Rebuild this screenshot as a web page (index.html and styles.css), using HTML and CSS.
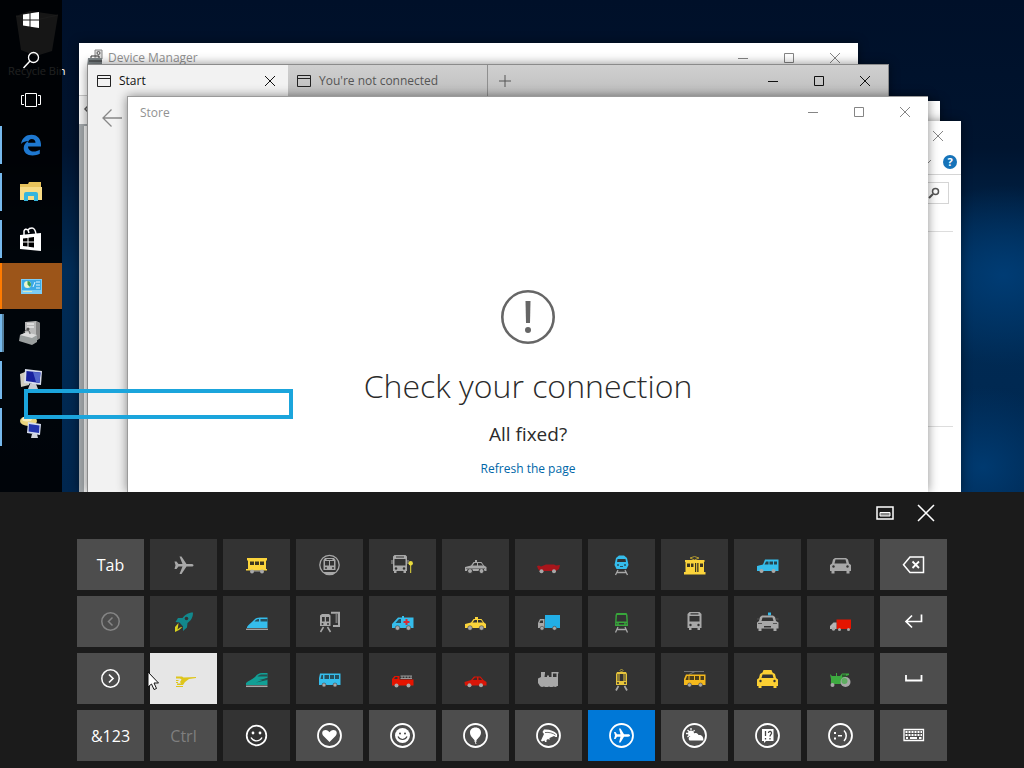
FILE: index.html
```html
<!DOCTYPE html>
<html lang="en">
    <head>
        <title>Desktop</title>
        <meta charset="UTF-8">
        <link rel="stylesheet" href="styles.css">
    </head>
    <body>
        <div class="desktop">
            <div class="recycle">
                <svg width="42" height="46" viewBox="0 0 42 46"><path d="M0 6 L14 1 L42 5 L36 41 L20 46 L5 40Z" fill="#b5b5b5"/><path d="M0 6L20 10L42 5" stroke="#ddd" fill="none"/></svg>
                <span>Recycle Bin</span>
            </div>

            <!-- system window -->
            <div class="window w-back"></div>
            <div class="window w-system">
                <div class="titlebar inactive">
                    <div class="caption">
                        <button aria-label="Close"><svg width="12" height="12" viewBox="0 0 12 12"><path d="M1 1L11 11M11 1L1 11"/></svg></button>
                    </div>
                </div>
                <div class="ribbon">
                    <svg width="9" height="6" viewBox="0 0 9 6"><path d="M0 1L4 5L8 1" fill="none" stroke="#888"/></svg>
                    <button class="help" aria-label="Help">?</button>
                </div>
                <div class="address">
                    <button class="find" aria-label="Search"><svg width="12" height="12" viewBox="0 0 12 12"><circle cx="7.500" cy="4.500" r="3" fill="none" stroke="#555" stroke-width="1.500"/><path d="M5 7L1 11" stroke="#555" stroke-width="2"/></svg></button>
                </div>
                <div class="panel"></div>
            </div>

            <!-- device manager -->
            <div class="window w-device">
                <div class="titlebar inactive">
                    <svg class="app-icon" width="16" height="18" viewBox="0 0 16 18"><path d="M8 1h7v9H8z" fill="#ddd" stroke="#888"/><circle cx="11.500" cy="4" r="1.500" fill="none" stroke="#555"/><path d="M1 9h14v9H0z" fill="#7d8588"/><path d="M2 12h13M4 9V7h8v2" stroke="#333" fill="none"/></svg>
                    <span class="name">Device Manager</span>
                    <div class="caption">
                        <button aria-label="Minimize"><svg width="12" height="12" viewBox="0 0 12 12"><path d="M1 6.500H11"/></svg></button>
                        <button aria-label="Maximize"><svg width="12" height="12" viewBox="0 0 12 12"><path d="M1.500 1.500H10.500V10.500H1.500Z"/></svg></button>
                        <button aria-label="Close"><svg width="12" height="12" viewBox="0 0 12 12"><path d="M1 1L11 11M11 1L1 11"/></svg></button>
                    </div>
                </div>
                <div class="menu"></div>
                <div class="tools"><svg width="8" height="10" viewBox="0 0 8 10"><path d="M6 1L2 5L6 9" fill="none" stroke="#555" stroke-width="1.500"/></svg></div>
                <div class="tree"></div>
            </div>

            <!-- browser -->
            <div class="window w-edge">
                <div class="tabs">
                    <div class="tab on">
                        <svg width="14" height="12" viewBox="0 0 14 12"><path d="M.5.5H13.500V11.500H.5ZM.5 3.500H13.500" fill="none" stroke="#222"/></svg>
                        <span>Start</span>
                        <button aria-label="Close tab"><svg width="12" height="12" viewBox="0 0 12 12"><path d="M1 1L11 11M11 1L1 11"/></svg></button>
                    </div>
                    <div class="tab">
                        <svg width="14" height="12" viewBox="0 0 14 12"><path d="M.5.5H13.500V11.500H.5ZM.5 3.500H13.500" fill="none" stroke="#222"/></svg>
                        <span>You're not connected</span>
                    </div>
                    <button class="new" aria-label="New tab"><svg width="12" height="12" viewBox="0 0 12 12"><path d="M6 0V12M0 6H12" stroke="#555"/></svg></button>
                    <div class="caption">
                        <button aria-label="Minimize"><svg width="12" height="12" viewBox="0 0 12 12"><path d="M1 6.500H11"/></svg></button>
                        <button aria-label="Maximize"><svg width="12" height="12" viewBox="0 0 12 12"><path d="M1.500 1.500H10.500V10.500H1.500Z"/></svg></button>
                        <button aria-label="Close"><svg width="12" height="12" viewBox="0 0 12 12"><path d="M1 1L11 11M11 1L1 11"/></svg></button>
                    </div>
                </div>
                <div class="nav">
                    <button aria-label="Back"><svg width="20" height="18" viewBox="0 0 20 18"><path d="M20 9H1M9.500 .5L1 9L9.500 17.500" fill="none" stroke="#888" stroke-width="1.300"/></svg></button>
                </div>
            </div>

            <!-- store -->
            <div class="window w-store">
                <div class="titlebar inactive">
                    <span class="name">Store</span>
                    <div class="caption">
                        <button aria-label="Minimize"><svg width="12" height="12" viewBox="0 0 12 12"><path d="M1 6.500H11"/></svg></button>
                        <button aria-label="Maximize"><svg width="12" height="12" viewBox="0 0 12 12"><path d="M1.500 1.500H10.500V10.500H1.500Z"/></svg></button>
                        <button aria-label="Close"><svg width="12" height="12" viewBox="0 0 12 12"><path d="M1 1L11 11M11 1L1 11"/></svg></button>
                    </div>
                </div>
                <div class="message">
                    <svg width="54" height="54" viewBox="0 0 54 54"><circle cx="27" cy="27" r="25.700" fill="none" stroke="#666" stroke-width="2.600"/><path d="M24.500 11H29.500L29 33H25Z" fill="#666"/><circle cx="27" cy="40" r="3" fill="#666"/></svg>
                    <h1>Check your connection</h1>
                    <p>All fixed?</p>
                    <a href="#">Refresh the page</a>
                </div>
            </div>

            <div class="taskbar">
                <button class="sys" aria-label="Start"><svg width="18" height="18" viewBox="0 0 18 18"><path d="M1 3.500L7.500 2.500V8.500H1ZM8.500 2.300L17 1V8.500H8.500ZM1 9.500H7.500V15.500L1 14.500ZM8.500 9.500H17V17L8.500 15.700Z" fill="#fff"/></svg></button>
                <button class="sys" aria-label="Search"><svg width="18" height="18" viewBox="0 0 18 18"><circle cx="11.500" cy="6.500" r="5" fill="none" stroke="#fff" stroke-width="1.300"/><path d="M8 10L1.500 17" stroke="#fff" stroke-width="1.500"/></svg></button>
                <button class="sys" aria-label="Task View"><svg width="20" height="16" viewBox="0 0 20 16"><path d="M4.500 1.500H15.500V14.500H4.500ZM3 3.500H.500V12.500H3M17 3.500H19.500V12.500H17" fill="none" stroke="#fff"/></svg></button>
                <button class="app" aria-label="Microsoft Edge"><svg width="22" height="22" viewBox="0 0 22 22"><path d="M1 10C2 4 6 .7 11.500 .7C18 .7 21.500 5.500 21 12.500H8C8.300 16 10.500 17.500 13.500 17.500C16 17.500 18 16.700 19.800 15.700V19.800C17.500 21 15.300 21.500 12.500 21.500C7 21.500 3.500 18.500 3.700 14C3.800 11 5.500 8.500 8.500 7C5.500 7 3 7.800 1 10ZM8 8.800H15.500C15.500 6.500 14 5 11.800 5C9.800 5 8.300 6.500 8 8.800Z" fill="#1e78d0"/></svg></button>
                <button class="app" aria-label="File Explorer"><svg width="22" height="20" viewBox="0 0 22 20"><path d="M0 2H8L9 0H21V18H0Z" fill="#e8c35c"/><path d="M0 5H22V18H0Z" fill="#f8dc86"/><path d="M4 19V12Q4 10 6 10H16Q18 10 18 12V19H14V14H8V19Z" fill="#35b5dd"/></svg></button>
                <button class="app" aria-label="Store"><svg width="22" height="25" viewBox="0 0 22 25"><path d="M4 8V4Q5 1 8 3L9 6M8 3Q9 1 12 1Q15 1 16 7" fill="none" stroke="#fff" stroke-width="1.500"/><path d="M0 8L21 6V24L0 22Z" fill="#fff"/><path d="M3 11.500L7.500 11V14.500H3ZM8.500 10.800L14 10V14.500H8.500ZM3 15.500H7.500V19.500L3 19ZM8.500 15.500H14V20.500L8.500 19.700Z" fill="#000"/></svg></button>
                <button class="app active" aria-label="Control Panel"><svg width="21" height="15" viewBox="0 0 21 15"><path d="M0 0H21V15H0Z" fill="#7dcdf5"/><path d="M1 1H20V11H1Z" fill="#3baae6"/><circle cx="6.500" cy="5.500" r="3.500" fill="#e9f4cf"/><path d="M6.500 5.500V2A3.500 3.500 0 0 1 9 8Z" fill="#3c9d4c"/><path d="M12 8L14 3M15 3H19M15 6H19M15 9H19" stroke="#dff6ff" stroke-width="1"/><path d="M2 12.500H11" stroke="#d7e8c0"/></svg></button>
                <button class="app many" aria-label="Device Manager"><svg width="22" height="24" viewBox="0 0 22 24"><path d="M6 1L17 0L21 2V17L17 20L6 18Z" fill="#b9b9b9"/><path d="M17 0L21 2V17L17 20Z" fill="#858585"/><path d="M8 3H15M8 6H15" stroke="#fff"/><circle cx="9" cy="8" r="1.500" fill="#555"/><path d="M1 14L8 11L18 14V21L13 24L0 20Z" fill="#9a9f9f"/><path d="M1 14L8 11L18 14L13 17Z" fill="#dcdcdc"/><path d="M5 12C5 8 11 8 11 13" stroke="#555" fill="none"/></svg></button>
                <button class="app" aria-label="System"><svg width="24" height="22" viewBox="0 0 24 22"><path d="M1 5L6 3L10 5V16L2 18Z" fill="#cfcbbf"/><path d="M6 0L23 2L22 16L5 14Z" fill="#d6dceb"/><path d="M7.500 2L21.500 3.500L20.500 14L7 12Z" fill="#18219e"/><path d="M14 3L21.500 3.500L20.500 14L17 13Z" fill="#5367cb"/><path d="M11 15H17L19 20H9Z" fill="#c7cbd2"/></svg></button>
                <button class="app" aria-label="Remote Desktop"><svg width="22" height="24" viewBox="0 0 22 24"><ellipse cx="8.500" cy="6" rx="8.500" ry="5" fill="#ead57e"/><ellipse cx="7" cy="4" rx="5" ry="2.500" fill="#f8edbd"/><path d="M8 7L21 9L20 20L7 18Z" fill="#d4dced"/><path d="M9 9L19.500 10.500L19 18L8.500 16.500Z" fill="#2335ad"/><path d="M12 19H17L18 23H11Z" fill="#d0d4da"/></svg></button>
            </div>
            <div class="highlight"></div>
        </div>

        <div class="keyboard">
            <div class="top">
                <button aria-label="Dock keyboard"><svg width="18" height="14" viewBox="0 0 18 14"><path d="M1 1H17V13H1Z" fill="none" stroke="#fff" stroke-width="1.500"/><path d="M4 6.500H14V10H4Z" fill="#888" stroke="#fff"/></svg></button>
                <button aria-label="Close keyboard"><svg width="18" height="18" viewBox="0 0 18 18"><path d="M1 1L17 17M17 1L1 17" stroke="#fff" stroke-width="1.500"/></svg></button>
            </div>
            <div class="keys">
                <!-- row 1 -->
                <button class="fn">Tab</button>
                <button aria-label="Airplane"><svg viewBox="0 0 25 25"><path d="M3.500 9.500H5.500L7.500 12H11.500L8.500 4.500H10.500L15.500 12H20C22 12 22.500 12.700 22.500 13.300S22 14.600 20 14.600H15.500L10.500 22H8.500L11.500 14.600H7.500L5.500 17H3.500L4.500 13.300Z" fill="#a8a8a8"/></svg></button>
                <button aria-label="Railway car"><svg viewBox="0 0 25 25"><path d="M3 6H23V8.500H22V17H23V18.500H2V17H4V8.500H3Z" fill="#fbd43b"/><path d="M6 9.500H10V13H6ZM11 9.500H15V13H11ZM16 9.500H20V13H16Z" fill="#3b3520"/><circle cx="8" cy="19.500" r="2" fill="#a8a8a8"/><circle cx="18" cy="19.500" r="2" fill="#a8a8a8"/><path d="M8 19H18" stroke="#a8a8a8"/></svg></button>
                <button aria-label="Metro"><svg viewBox="0 0 25 25"><circle cx="12.500" cy="13" r="9.700" fill="none" stroke="#a8a8a8" stroke-width="1.300"/><path d="M8 6H17L18.500 8V18H6.500V8Z" fill="#a8a8a8"/><path d="M8 9H12V13.500H8ZM13 9H17V13.500H13Z" fill="#333"/><path d="M9.500 7.500H15.500" stroke="#333"/><circle cx="9" cy="16" r="1" fill="#333"/><circle cx="16" cy="16" r="1" fill="#333"/><path d="M6 20H19L16 22.500H9Z" fill="#a8a8a8"/></svg></button>
                <button aria-label="Bus stop"><svg viewBox="0 0 25 25"><path d="M4.500 3H15.500L17 4.500V19H16V21H13.500V19H6.500V21H4V19H3V4.500Z" fill="#a8a8a8"/><path d="M4.500 7H15.500V13.500H4.500ZM6 4.500H14V5.500H6Z" fill="#333"/><circle cx="6" cy="16.500" r="1.200" fill="#333"/><circle cx="14" cy="16.500" r="1.200" fill="#333"/><path d="M2 8V12M18 8V12" stroke="#a8a8a8"/><circle cx="20.700" cy="11.300" r="2.200" fill="#eadc3d"/><path d="M20.700 12V21" stroke="#eadc3d"/></svg></button>
                <button aria-label="Police car"><svg viewBox="0 0 25 25"><path d="M2 15L8 13.500L10.500 10H12V8H14V10H18.500L21 13.500L23.500 15V19H2Z" fill="#a8a8a8"/><path d="M9.500 13.500L11.500 11H14V13.500ZM15 11H18L20 13.500H15Z" fill="#333"/><circle cx="7" cy="19" r="2.500" fill="#a8a8a8" stroke="#333"/><circle cx="18.500" cy="19" r="2.500" fill="#a8a8a8" stroke="#333"/><path d="M3 16.500H22" stroke="#777"/></svg></button>
                <button aria-label="Race car"><svg viewBox="0 0 25 25"><path d="M1 14L3 13.500L5 14.500L10 12.500H18L20 13.500L24 13L23 17L20 19H4L2 17Z" fill="#a8151b"/><circle cx="5.500" cy="19.300" r="2" fill="#a8a8a8"/><circle cx="18" cy="19.300" r="2" fill="#a8a8a8"/></svg></button>
                <button aria-label="Train"><svg viewBox="0 0 25 25"><path d="M10 3.500H15L18 6L19.500 13L17.500 17H7.500L5.500 13L7 6Z" fill="#35bdec"/><path d="M8.500 7H16.500L17 10H8Z" fill="#333"/><circle cx="9" cy="13" r="1" fill="#26505e"/><circle cx="16" cy="13" r="1" fill="#26505e"/><path d="M11 14.500H14" stroke="#26505e"/><path d="M9 18L6.500 23M16 18L18.500 23M8 20.500H17" stroke="#a8a8a8" stroke-width="1.300"/></svg></button>
                <button aria-label="Tram car"><svg viewBox="0 0 25 25"><path d="M12.500 8L8 6L12.500 4.500L17 6Z" fill="none" stroke="#b49a30"/><path d="M3 8H22.500V10H22V20H23.500V22.500H2V20H3.500V10H3Z" fill="#fbd43b"/><path d="M5 11.500H8V15H5ZM9 11.500H11.500V15H9ZM13 11H16.500V20H13ZM18 11.500H21V15H18Z" fill="#3b3520"/><path d="M14.700 11V20" stroke="#fbd43b"/></svg></button>
                <button aria-label="Van"><svg viewBox="0 0 25 25"><path d="M2 14L8 12.500L10 7.500H23.500V19H2Z" fill="#35bdec"/><path d="M9.500 12.500L11 9.500H13.500V12.500ZM14.500 9.500H18V12.500H14.500ZM19 9.500H22V12.500H19Z" fill="#26424c"/><circle cx="6.500" cy="19" r="2" fill="#a8a8a8"/><circle cx="18.500" cy="19" r="2" fill="#a8a8a8"/></svg></button>
                <button aria-label="Oncoming car"><svg viewBox="0 0 25 25"><path d="M7 6H18L20 7.500L21 11.500L23 13V19H21.500V21.500H18.500V19H6.500V21.500H3.500V19H2V13L4 11.500L5 7.500Z" fill="#a8a8a8"/><path d="M7.500 7.500H17.500L18.500 11.500H6.500Z" fill="#333"/><circle cx="5.500" cy="14.500" r="1.200" fill="#333"/><circle cx="19.500" cy="14.500" r="1.200" fill="#333"/></svg></button>
                <button class="fn" aria-label="Backspace"><svg viewBox="0 0 25 25"><path d="M9 5H22.500V20.500H9L2.500 12.700Z" fill="none" stroke="#fff" stroke-width="1.500"/><path d="M11.500 9.500L18 16M18 9.500L11.500 16" stroke="#fff" stroke-width="1.800"/></svg></button>

                <!-- row 2 -->
                <button class="fn off" aria-label="Previous"><svg viewBox="0 0 25 25"><circle cx="12.500" cy="12.500" r="8.700" fill="none" stroke="#858585" stroke-width="1.500"/><path d="M14.500 8.500L10.500 12.500L14.500 16.500" fill="none" stroke="#858585" stroke-width="1.500"/></svg></button>
                <button aria-label="Rocket"><svg viewBox="0 0 25 25"><path d="M22 3.500C17 3.500 13.500 6 11.500 9H7L4.500 13L8.500 13.500L12 17.500V22L16 18.500L16.500 14C20 11.500 22 8.500 22 3.500Z" fill="#12888c"/><circle cx="15.500" cy="9.500" r="1.800" fill="#333"/><path d="M7.500 14L4 18V23L8 21L11.500 18L9 18.500L6.500 20.500L7 18Z" fill="#d9d21d"/></svg></button>
                <button aria-label="High-speed train"><svg viewBox="0 0 25 25"><path d="M3 18C4 16 7 14 9 12C11 9.500 13 8.500 16 8.500H23.500V19H3Z" fill="#35bdec"/><path d="M10.500 12.500C12 10.500 13.500 10 15 10V12.500ZM16.500 10H23.500V12.500H16.500Z" fill="#26505e"/><path d="M2 20.300H24" stroke="#a8a8a8" stroke-width="1.300"/></svg></button>
                <button aria-label="Station"><svg viewBox="0 0 25 25"><path d="M5 5H12L13.500 6.500V17H3V6.500Z" fill="#a8a8a8"/><path d="M5 8H7.700V12.500H5ZM9 8H12V12.500H9Z" fill="#333"/><circle cx="5.500" cy="15" r="1" fill="#333"/><circle cx="11" cy="15" r="1" fill="#333"/><path d="M6.500 18L3.500 23M10.500 18L13.500 23" stroke="#a8a8a8" stroke-width="1.500"/><path d="M14 3.800H22V17H16" fill="none" stroke="#a8a8a8" stroke-width="2"/><path d="M19.500 5V14" stroke="#777" stroke-width="2"/></svg></button>
                <button aria-label="Ambulance"><svg viewBox="0 0 25 25"><path d="M2 15L8 8.500H12V7H14V8.500H23.500V19H2Z" fill="#35bdec"/><path d="M5.500 14L9 10H11V14Z" fill="#26505e"/><path d="M16.500 10V16M13.500 13H19.500" stroke="#d92b32" stroke-width="2"/><circle cx="7.500" cy="19" r="2.300" fill="#a8a8a8" stroke="#333" stroke-width=".5"/><circle cx="18.500" cy="19" r="2.300" fill="#a8a8a8" stroke="#333" stroke-width=".5"/></svg></button>
                <button aria-label="Taxi"><svg viewBox="0 0 25 25"><path d="M2 15L8 13.500L10.500 10H12V8H15V10H18.500L21 13.500L23 15V19H2Z" fill="#fbd43b"/><path d="M9.500 13.500L11.500 11H14V13.500ZM15 11H18L20 13.500H15Z" fill="#333"/><circle cx="7" cy="19" r="2.300" fill="#a8a8a8" stroke="#333" stroke-width=".5"/><circle cx="18.500" cy="19" r="2.300" fill="#a8a8a8" stroke="#333" stroke-width=".5"/></svg></button>
                <button aria-label="Delivery truck"><svg viewBox="0 0 25 25"><path d="M9 6H24V19H9Z" fill="#22aee6"/><path d="M4 10H8.500V19H2V14Z" fill="#a8a8a8"/><path d="M4.500 11.500H7V14H3.500Z" fill="#333"/><circle cx="6" cy="19.300" r="2" fill="#a8a8a8" stroke="#333" stroke-width=".5"/><circle cx="18.500" cy="19.300" r="2" fill="#a8a8a8" stroke="#333" stroke-width=".5"/></svg></button>
                <button aria-label="Light rail"><svg viewBox="0 0 25 25"><path d="M7.500 4H17.500L18.500 6L19 17H6L6.500 6Z" fill="#38a63b"/><path d="M8 6H17L17.500 12.500H7.500ZM7.500 14H17.500V15.500H7.500Z" fill="#333"/><circle cx="9" cy="15" r="1" fill="#38a63b"/><circle cx="16" cy="15" r="1" fill="#38a63b"/><path d="M9 18L6.500 23.500M16 18L18.500 23.500M8 20.500H17" stroke="#a8a8a8" stroke-width="1.300"/></svg></button>
                <button aria-label="Oncoming bus"><svg viewBox="0 0 25 25"><path d="M7.500 3H17.500L19.500 5V19H18V21H15.500V19H9.500V21H7V19H5.500V5Z" fill="#a8a8a8"/><path d="M7.500 7H17.500V12.500H7.500ZM8.500 4.300H16.500V5.500H8.500Z" fill="#333"/><circle cx="8.500" cy="16" r="1.200" fill="#333"/><circle cx="16.500" cy="16" r="1.200" fill="#333"/></svg></button>
                <button aria-label="Oncoming police car"><svg viewBox="0 0 25 25"><path d="M13 3.500H16V6.500H13Z" fill="#35bdec"/><path d="M7 6.500H18L20 8L21 12L23.500 13.500V19.500H21.500V22H18.500V19.500H6.500V22H3.500V19.500H2V13.500L4 12L5 8Z" fill="#a8a8a8"/><path d="M7.500 8.500H17.500L18.500 12H6.500ZM9 17H16V18.500H9Z" fill="#333"/><path d="M3 14.500H7M18 14.500H22M2 10H4M21 10H23.500" stroke="#555"/></svg></button>
                <button aria-label="Truck"><svg viewBox="0 0 25 25"><path d="M8.500 10.500H23V20H8.500Z" fill="#e51400"/><path d="M5.500 13.500H8.500V20H2V17Z" fill="#b5b5b5"/><circle cx="5.500" cy="20" r="1.800" fill="#a8a8a8"/><circle cx="11.500" cy="20.500" r="1.500" fill="#a8a8a8"/><circle cx="20.500" cy="20.500" r="1.500" fill="#a8a8a8"/></svg></button>
                <button class="fn" aria-label="Enter"><svg viewBox="0 0 25 25"><path d="M20.500 5.500V12.500H5M11 6.500L5 12.500L11 18.500" fill="none" stroke="#fff" stroke-width="1.700"/></svg></button>

                <!-- row 3 -->
                <button class="fn" aria-label="Next"><svg viewBox="0 0 25 25"><circle cx="12.500" cy="12.500" r="8.700" fill="none" stroke="#fff" stroke-width="1.500"/><path d="M11 8.500L15 12.500L11 16.500" fill="none" stroke="#fff" stroke-width="1.700"/></svg></button>
                <button class="hover" aria-label="Helicopter"><svg viewBox="0 0 25 25"><path d="M5 10.500H11L12.500 11.500L25 11V12L18 13L14 16L12 19H6V17.500H10L9 16L10.500 13.500L9 12.500H5Z" fill="#dec51b"/><path d="M5 14.500H7.500M5 16.500H7M5 20.500H12" stroke="#dec51b"/></svg>
                    <svg class="cursor" width="13" height="20" viewBox="0 0 13 20"><path d="M1 1V16L4.500 13L7 18.500L9.500 17.500L7 12H11.500Z" fill="#fff" stroke="#111"/></svg></button>
                <button aria-label="Bullet train"><svg viewBox="0 0 25 25"><path d="M2 17C4 15 8 13.500 11 11C13.500 8 15 7 18 7H23.500V12L15 14L23.500 13.500V19H2Z" fill="#12a096"/><path d="M13.500 10L17 8.500H23.500V10.500H14ZM12 16.500L23.500 12V14Z" fill="#265050"/><path d="M2 20.300H23.500" stroke="#a8a8a8" stroke-width="1.500"/></svg></button>
                <button aria-label="Bus"><svg viewBox="0 0 25 25"><path d="M3 7.500H23.500V19H2V12Z" fill="#35bdec"/><path d="M3.500 13L4.500 9H6V13ZM7.500 9H12V13H7.500ZM13 9H17V13H13ZM18 9H22V13H18Z" fill="#26505e"/><circle cx="7" cy="19" r="2" fill="#a8a8a8" stroke="#333" stroke-width=".5"/><circle cx="18" cy="19" r="2" fill="#a8a8a8" stroke="#333" stroke-width=".5"/></svg></button>
                <button aria-label="Fire engine"><svg viewBox="0 0 25 25"><path d="M2 13L4.500 10H9.500V13.500H23.500V19.500H2Z" fill="#e51400"/><path d="M4 13L5.500 11H7.500V13Z" fill="#333"/><path d="M10.500 10H22M10.500 12.500H22M12 10V12.500M15 10V12.500M18 10V12.500M21 10V12.500" stroke="#999"/><circle cx="6.500" cy="19.500" r="2" fill="#a8a8a8"/><circle cx="18.500" cy="19.500" r="2" fill="#a8a8a8"/></svg></button>
                <button aria-label="Car"><svg viewBox="0 0 25 25"><path d="M1.500 16L8 14L11 10.500H17.500L20.500 14L23.500 16V19.500H2Z" fill="#d91608"/><path d="M9.500 14L12 11.500H14V14ZM15.500 11.500H17L19 14H15.500Z" fill="#4a2623"/><circle cx="6.500" cy="19.300" r="2" fill="#a8a8a8"/><circle cx="18" cy="19.300" r="2" fill="#a8a8a8"/></svg></button>
                <button aria-label="Locomotive"><svg viewBox="0 0 25 25"><path d="M5 6H9V7L8.500 11H11V9.500H13V11H15.500V6H22.500V7.500H22V20H21Q20 21.500 17.500 20.500Q15.500 21.500 13 20.500Q10.500 21.500 8 20.500Q5.500 21.500 4 20L2 17V12.500L5 11Z" fill="#a8a8a8"/><path d="M17 7.500H20.500V11H17Z" fill="#333"/></svg></button>
                <button aria-label="Tram"><svg viewBox="0 0 25 25"><path d="M12.500 6L11 4.500L12.500 3L14 4.500Z" fill="none" stroke="#b5a13b"/><path d="M8 6H17L18 8V19H7V8Z" fill="#e6c43b"/><path d="M8.500 8H9.500V15H8.500ZM10.500 8H14.500V15H10.500ZM15.500 8H16.500V15H15.500Z" fill="#333"/><circle cx="9" cy="17" r="1" fill="#333"/><circle cx="16" cy="17" r="1" fill="#333"/><path d="M9.500 20L7 24.500M15.500 20L18 24.500" stroke="#a8a8a8" stroke-width="1.700"/></svg></button>
                <button aria-label="Trolleybus"><svg viewBox="0 0 25 25"><path d="M2 5.500H22M7 8.500L13 5.500" stroke="#777"/><path d="M4 8.500H23.500V19H2V13Z" fill="#f4b81c"/><path d="M3.500 14L5 10H6.500V14ZM7.500 10H12V14H7.500ZM13 10H17V14H13ZM18.500 10H22V14H18.500Z" fill="#4b3e1b"/><circle cx="7.500" cy="19" r="2" fill="#a8a8a8" stroke="#333" stroke-width=".5"/><circle cx="18.500" cy="19" r="2" fill="#a8a8a8" stroke="#333" stroke-width=".5"/></svg></button>
                <button aria-label="Oncoming taxi"><svg viewBox="0 0 25 25"><path d="M8.500 4H16.500L17.500 6.500L20 8L21 12L23 13.500V20H21.500V22H18.500V20H6.500V22H3.500V20H2V13.500L4 12L5 8L7.500 6.500Z" fill="#fbcf33"/><path d="M7.500 8.500H17.500L18.500 12H6.500Z" fill="#333"/><circle cx="5.500" cy="15" r="1.200" fill="#333"/><circle cx="19.500" cy="15" r="1.200" fill="#333"/></svg></button>
                <button aria-label="Tractor"><svg viewBox="0 0 25 25"><path d="M2 8L4 10H8V7H9V10H12L14 7.500H21V9L18 10V18H3V13Z" fill="#3dab40"/><path d="M14 8.500H18V11H14Z" fill="#2c5b2e"/><circle cx="17.500" cy="16" r="5" fill="#a8a8a8"/><circle cx="16.500" cy="15" r="3" fill="#5fae61"/><circle cx="4.500" cy="19" r="2" fill="#a8a8a8"/></svg></button>
                <button class="fn" aria-label="Space"><svg viewBox="0 0 25 25"><path d="M5 9V14.500H20.500V9" fill="none" stroke="#fff" stroke-width="1.800"/></svg></button>

                <!-- row 4 -->
                <button class="fn">&amp;123</button>
                <button class="fn off" disabled>Ctrl</button>
                <button aria-label="Emoji"><svg viewBox="0 0 25 25"><circle cx="12.500" cy="12.500" r="9.800" fill="none" stroke="#fff" stroke-width="1.700"/><circle cx="9" cy="10" r="1.400" fill="#fff"/><circle cx="16" cy="10" r="1.400" fill="#fff"/><path d="M7 14.500C9.500 19 15.500 19 18 14.500" fill="none" stroke="#fff" stroke-width="1.400"/></svg></button>
                <button class="fn" aria-label="Hearts"><svg viewBox="0 0 25 25"><circle cx="12.500" cy="12.500" r="11.500" fill="none" stroke="#fff" stroke-width="1.800"/><path d="M12.500 19L6.500 13C4 10 5.500 7 8.500 7C10.500 7 11.700 8 12.500 9.300C13.300 8 14.500 7 16.500 7C19.500 7 21 10 18.500 13Z" fill="#fff"/></svg></button>
                <button class="fn" aria-label="Smileys"><svg viewBox="0 0 25 25"><circle cx="12.500" cy="12.500" r="11.500" fill="none" stroke="#fff" stroke-width="1.800"/><circle cx="12.500" cy="12.500" r="7.500" fill="#fff"/><circle cx="10" cy="10.500" r="1" fill="#444"/><circle cx="15" cy="10.500" r="1" fill="#444"/><path d="M8 13.500C10 17.500 15 17.500 17 13.500" fill="none" stroke="#444" stroke-width="1.200"/></svg></button>
                <button class="fn" aria-label="Celebrations"><svg viewBox="0 0 25 25"><circle cx="12.500" cy="12.500" r="11.500" fill="none" stroke="#fff" stroke-width="1.800"/><path d="M12.500 4.500C16 4.500 18 6.700 18 9.500C18 13 15 15 13.300 17.500L14 18.500H12.700L13.500 21H12.500L12 18.500H11L11.700 17.500C10 15 7 13 7 9.500C7 6.700 9 4.500 12.500 4.500Z" fill="#fff"/></svg></button>
                <button class="fn" aria-label="Food"><svg viewBox="0 0 25 25"><circle cx="12.500" cy="12.500" r="11.500" fill="none" stroke="#fff" stroke-width="1.800"/><path d="M8 6.500C13 6 18 7.500 21 11V14H19.500L18 13L13.500 15V17L12 16L10.500 17V19H9L8.500 17.500L6 18.500L5 17.500L8 11L6.500 9Z" fill="#fff"/><path d="M9 9.500C13 9 17 10 19.500 12" fill="none" stroke="#4d4d4d" stroke-width=".8"/></svg></button>
                <button class="selected" aria-label="Travel"><svg viewBox="0 0 25 25"><circle cx="12.500" cy="12.500" r="11.500" fill="none" stroke="#fff" stroke-width="1.800"/><path d="M5 9H6.500L8 11.300H11.500L10 5.500H11.500L15 11.300H19C20.500 11.300 21 12 21 12.500S20.500 13.700 19 13.700H15L11.500 19.500H10L11.500 13.700H8L6.500 16H5L6 12.500Z" fill="#fff"/></svg></button>
                <button class="fn" aria-label="Weather"><svg viewBox="0 0 25 25"><circle cx="12.500" cy="12.500" r="11.500" fill="none" stroke="#fff" stroke-width="1.800"/><circle cx="9" cy="10.500" r="3" fill="#fff"/><path d="M9 5V7M4 10.500H6M5.500 7L7 8.500M12.500 7L11.500 8.500M5.500 14L7 12.500" stroke="#fff" stroke-width="1.300"/><path d="M7.500 17.500C5.500 15 7.500 12.500 10 13C10.500 9.500 15 9 16.500 12C19 11.500 21.500 13 21.500 17.500Z" fill="#fff"/></svg></button>
                <button class="fn" aria-label="Symbols"><svg viewBox="0 0 25 25"><circle cx="12.500" cy="12.500" r="11.500" fill="none" stroke="#fff" stroke-width="1.800"/><path d="M7 6H18.500V18H11L9 20V18H7Z" fill="#fff"/><path d="M10.500 8V13M10.500 15V16.500M13.500 10C13.500 7.500 17 8 16.500 10.500C16 11.500 15 12 15 13.500M15 15V16.500" fill="none" stroke="#444" stroke-width="1.300"/></svg></button>
                <button class="fn" aria-label="Emoticons"><svg viewBox="0 0 25 25"><circle cx="12.500" cy="12.500" r="11.500" fill="none" stroke="#fff" stroke-width="1.800"/><path d="M6 9H8V11H6ZM6 14.500H8V16.500H6ZM10 12H14V13.500H10Z" fill="#fff"/><path d="M16 7.500C19 10.500 19 15 16 18" fill="none" stroke="#fff" stroke-width="1.500"/></svg></button>
                <button class="fn" aria-label="Keyboard layout"><svg viewBox="0 0 25 25"><path d="M3 6.500H22.500V17.500H3Z" fill="none" stroke="#fff" stroke-width="1.300"/><path d="M4.500 9H21M4.500 12H21" stroke="#fff" stroke-width="2" stroke-dasharray="2 1"/><path d="M5 15H7M9 15H16M18 15H20.500" stroke="#fff" stroke-width="1.800"/></svg></button>
            </div>
        </div>
    </body>
</html>
```
FILE: styles.css
```css
*{
    box-sizing: border-box;
}
body{
    margin: 0;
    height: 100vh;
    display: flex;
    flex-direction: column;
    overflow: hidden;
    background: #1b1b1b;
    font-family: "Open Sans", "Noto Sans", sans-serif;
}
button{
    padding: 0;
    border: 0;
    background: none;
    font-family: inherit;
    color: inherit;
}
svg{
    display: block;
}

/* desktop */
.desktop{
    position: relative;
    flex: 1;
    overflow: hidden;
    background:
        radial-gradient(ellipse 110px 90px at 98% 56%, #003c74, transparent),
        radial-gradient(ellipse 90px 80px at 96% 95%, #003a70, transparent),
        linear-gradient(#001029, #00142f 30%, #002c56 55%, #00264e);
}
.recycle{
    position: absolute;
    left: 8px;
    top: 10px;
    display: flex;
    flex-direction: column;
    align-items: center;
    gap: 7px;
    font-size: 11px;
    line-height: 16px;
    color: #fff;
    white-space: nowrap;
}
.taskbar{
    position: absolute;
    left: 0;
    top: 0;
    bottom: 0;
    width: 62px;
    display: flex;
    flex-direction: column;
    gap: 1px;
    background: rgba(0, 0, 0, 0.88);
}
.taskbar button{
    display: flex;
    align-items: center;
    justify-content: center;
    flex: none;
}
.taskbar .sys{
    height: 39px;
}
.taskbar .sys + .app{
    margin-top: 2px;
}
.taskbar .app{
    height: 46px;
    background: linear-gradient(#76b9ed, #76b9ed) left center / 2px 38px no-repeat;
}
.taskbar .many{
    padding-right: 2px;
    background: linear-gradient(90deg, #76b9ed 2px, #54809f 2px) left center / 4px 38px no-repeat;
}
.taskbar .active{
    padding-right: 2px;
    background: #9c5519;
    border-left: 2px solid #ff7b00;
}
.highlight{
    position: absolute;
    left: 24px;
    top: 389px;
    width: 269px;
    height: 30px;
    border: 4px solid #1ba5dc;
}

/* windows */
.window{
    position: absolute;
    bottom: 0;
    display: flex;
    flex-direction: column;
    background: #fff;
    box-shadow: 0 0 10px rgba(0, 0, 0, 0.45);
}
.w-back{
    left: 140px;
    right: 84px;
    top: 101px;
}
.w-system{
    left: 160px;
    right: 63px;
    top: 121px;
}
.w-device{
    left: 79px;
    right: 166px;
    top: 43px;
}
.w-edge{
    left: 87px;
    right: 135px;
    top: 64px;
    background: #f2f2f2;
    border: 1px solid #8b8b8b;
    border-bottom: 0;
}
.w-store{
    left: 127px;
    right: 96px;
    top: 96px;
    border: 1px solid #9a9a9a;
    border-right: 0;
    border-bottom: 0;
}
.titlebar{
    display: flex;
    align-items: center;
    height: 29px;
    font-size: 12px;
    color: #929292;
}
.caption{
    display: flex;
    align-self: stretch;
    margin-left: auto;
}
.caption button{
    width: 46px;
    display: flex;
    align-items: center;
    justify-content: center;
}
.caption path,
.tab button path{
    fill: none;
    stroke: #111;
}
.inactive .caption path{
    stroke: #858585;
}
.app-icon{
    margin: 0 5px 0 8px;
}
.w-store .titlebar{
    height: 30px;
}
.w-store .name{
    margin-left: 12px;
}

/* device manager */
.menu{
    height: 24px;
    border-bottom: 1px solid #c8c8c8;
}
.tools{
    height: 28px;
    padding: 8px 0 0 4px;
    background: #f4f4f4;
}
.tree{
    flex: 1;
    border-left: 5px solid #a2a7aa;
    border-top: 2px solid #a2a7aa;
    background: #f2f2f2;
}

/* browser */
.tabs{
    display: flex;
    height: 31px;
    background: linear-gradient(#d0d0d0, #bebebe);
}
.tab{
    display: flex;
    align-items: center;
    gap: 8px;
    width: 200px;
    padding: 0 11px 0 9px;
    border-right: 1px solid #8f8f8f;
    font-size: 12px;
    color: #555;
}
.tab.on{
    background: #f2f2f2;
    border-color: #f2f2f2;
    color: #111;
}
.tab button{
    margin-left: auto;
}
.new{
    padding: 0 11px;
}
.nav{
    padding: 13px 14px;
}

/* system */
.ribbon{
    display: flex;
    align-items: center;
    justify-content: flex-end;
    gap: 11px;
    height: 25px;
    padding-right: 4px;
    border-bottom: 1px solid #d5d5d5;
}
.help{
    width: 14px;
    height: 14px;
    border-radius: 50%;
    background: #1673b9;
    color: #fff;
    font-size: 11px;
    font-weight: bold;
    line-height: 14px;
}
.address{
    display: flex;
    justify-content: flex-end;
    padding: 7px 12px 27px;
}
.find{
    display: flex;
    align-items: center;
    justify-content: flex-end;
    width: 200px;
    height: 22px;
    padding-right: 8px;
    border: 1px solid #d5d5d5;
}
.panel{
    height: 196px;
    margin-right: 8px;
    border-top: 1px solid #ddd;
    border-bottom: 1px solid #ddd;
}

/* store */
.message{
    display: flex;
    flex-direction: column;
    align-items: center;
    padding-top: 163px;
    color: #2b2b2b;
}
.message h1{
    margin: 20px 0 12px;
    font-size: 32px;
    font-weight: 300;
    line-height: 44px;
}
.message p{
    margin: 0 0 12px;
    font-size: 19px;
    line-height: 28px;
}
.message a{
    color: #0067a8;
    font-size: 12px;
    line-height: 18px;
    text-decoration: none;
}

/* touch keyboard */
.keyboard{
    flex: none;
    position: relative;
    padding: 0 77px 7px;
    background: #1b1b1b;
    color: #fff;
}
.top{
    display: flex;
    align-items: center;
    justify-content: flex-end;
    gap: 23px;
    height: 47px;
    padding: 0 12px 6px 0;
}
.keys{
    display: grid;
    grid-template-columns: repeat(12, 1fr);
    grid-auto-rows: 51px;
    gap: 6px;
}
.keys button{
    position: relative;
    display: flex;
    align-items: center;
    justify-content: center;
    background: #333;
    font-size: 16px;
}
.keys svg{
    width: 25px;
    height: 25px;
}
.keys .fn{
    background: #4d4d4d;
}
.keys .off{
    color: #7f7f7f;
}
.keys .hover{
    background: #e6e6e6;
}
.keys .selected{
    background: #0078d7;
}
.keys .cursor{
    position: absolute;
    left: -3px;
    top: 18px;
    width: 13px;
    height: 20px;
}
```
